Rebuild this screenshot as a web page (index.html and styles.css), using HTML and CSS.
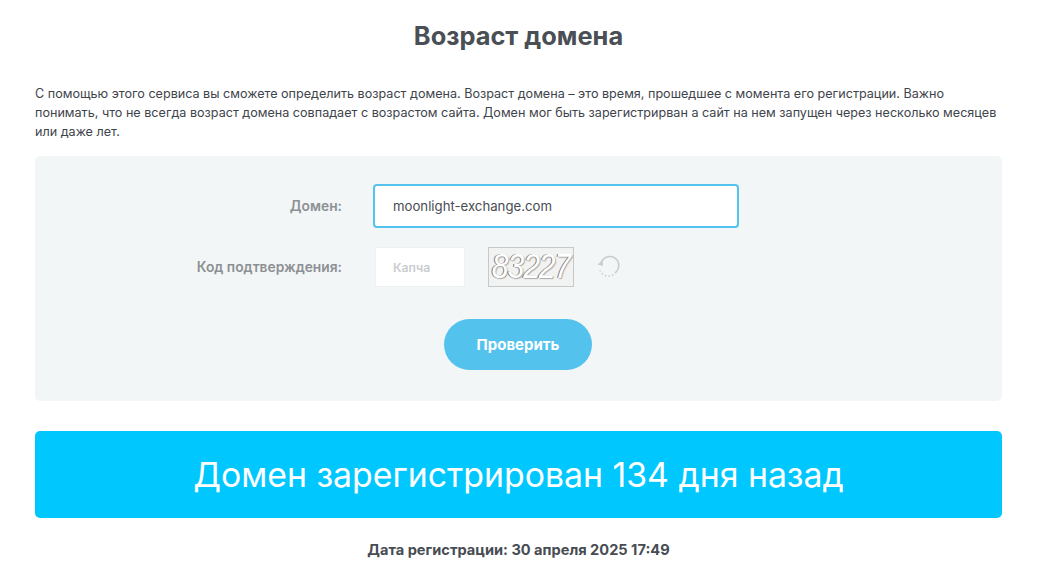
FILE: index.html
```html
<!DOCTYPE html>
<html lang="ru">
<head>
    <meta charset="UTF-8">
    <title>Возраст домена</title>
    <link rel="stylesheet" href="styles.css">
</head>
<body>
    <div class="wrap">
        <h1>Возраст домена</h1>

        <p class="intro">С помощью этого сервиса вы сможете определить возраст домена. Возраст домена – это время, прошедшее с момента его регистрации. Важно понимать, что не всегда возраст домена совпадает с возрастом сайта. Домен мог быть зарегистрирван а сайт на нем запущен через несколько месяцев или даже лет.</p>

        <form class="panel">
            <div class="row row-domain">
                <label class="label" for="domain">Домен:</label>
                <input class="input-domain" type="text" id="domain" value="moonlight-exchange.com">
            </div>
            <div class="row row-captcha">
                <label class="label" for="captcha">Код подтверждения:</label>
                <input class="input-captcha" type="text" id="captcha" placeholder="Капча">
                <div class="captcha-img"><span>83227</span></div>
                <svg class="refresh" width="24" height="24" viewBox="0 0 24 24" fill="none" stroke="#c9cccf" stroke-width="1.6">
                    <path d="M5 8.5A9 9 0 1 1 20 17"/>
                    <path d="M20 17A9 9 0 0 1 4 15.5" stroke-dasharray="1.5 2.2"/>
                    <path d="M1.5 9.5 L7 11 L6.5 5.5" fill="#c9cccf" stroke="none"/>
                </svg>
            </div>
            <div class="actions">
                <button class="btn" type="button">Проверить</button>
            </div>
        </form>

        <div class="result">Домен зарегистрирован 134 дня назад</div>
        <p class="reg-date">Дата регистрации: 30 апреля 2025 17:49</p>
    </div>
</body>
</html>
```

FILE: styles.css
```css
body {
    margin: 0;
    font-family: Inter, "Open Sans", sans-serif;
    background-color: #fff;
    color: #3e444b;
}

.wrap {
    width: 967px;
    margin-left: 35px;
}

h1 {
    margin: 0;
    padding-top: 21px;
    font-size: 25.4px;
    line-height: 30px;
    font-weight: 700;
    text-align: center;
    color: #4a4f55;
}

.intro {
    margin: 33px 0 15px;
    font-size: 12.6px;
    line-height: 19px;
    color: #3e444b;
}

.panel {
    height: 245px;
    padding-top: 28px;
    box-sizing: border-box;
    background: #f3f6f7;
    border-radius: 5px;
}

.row {
    display: flex;
    align-items: center;
}

.label {
    width: 307px;
    text-align: right;
    font-size: 13.8px;
    font-weight: 600;
    color: #8c9094;
}

.row-domain .label {
    margin-right: 31px;
}

.input-domain {
    width: 366px;
    height: 44px;
    box-sizing: border-box;
    padding: 0 18px;
    border: 2px solid #53c3ee;
    border-radius: 4px;
    background: #fff;
    font-family: inherit;
    font-size: 13.2px;
    color: #474c52;
    outline: none;
}

.row-captcha {
    margin-top: 19px;
}

.row-captcha .label {
    margin-right: 33px;
}

.input-captcha {
    width: 90px;
    height: 40px;
    box-sizing: border-box;
    padding: 0 0 0 17px;
    border: 1px solid #eef1f3;
    border-radius: 2px;
    background: #fff;
    font-family: inherit;
    font-size: 12.2px;
    font-weight: 600;
    outline: none;
}

.input-captcha::placeholder {
    color: #c9ccd0;
    opacity: 1;
}

.captcha-img {
    width: 86px;
    height: 40px;
    box-sizing: border-box;
    margin-left: 23px;
    border: 1px solid #c6c8c9;
    background: #f1f2f2;
    text-align: center;
    white-space: nowrap;
}

.captcha-img span {
    display: inline-block;
    font-family: "Liberation Sans", sans-serif;
    font-style: italic;
    font-size: 30px;
    line-height: 36px;
    letter-spacing: -1px;
    color: #fff;
    text-shadow: -1px 0 0 #777, 1px 1px 1px #aaa;
    transform: scaleY(1.15);
}

.refresh {
    margin-left: 22px;
}

.actions {
    display: flex;
    justify-content: center;
    margin-top: 32px;
    padding-right: 1px;
}

.btn {
    width: 148px;
    height: 51px;
    border: none;
    border-radius: 26px;
    background: #53c3ee;
    color: #fff;
    font-family: inherit;
    font-size: 15px;
    font-weight: 700;
}

.result {
    margin-top: 30px;
    height: 87px;
    background: #00c8ff;
    border-radius: 5px;
    color: #fff;
    font-size: 33.8px;
    line-height: 87px;
    text-align: center;
}

.reg-date {
    margin: 23px 0 0;
    font-size: 14.6px;
    font-weight: 700;
    text-align: center;
    color: #474c52;
}
```
